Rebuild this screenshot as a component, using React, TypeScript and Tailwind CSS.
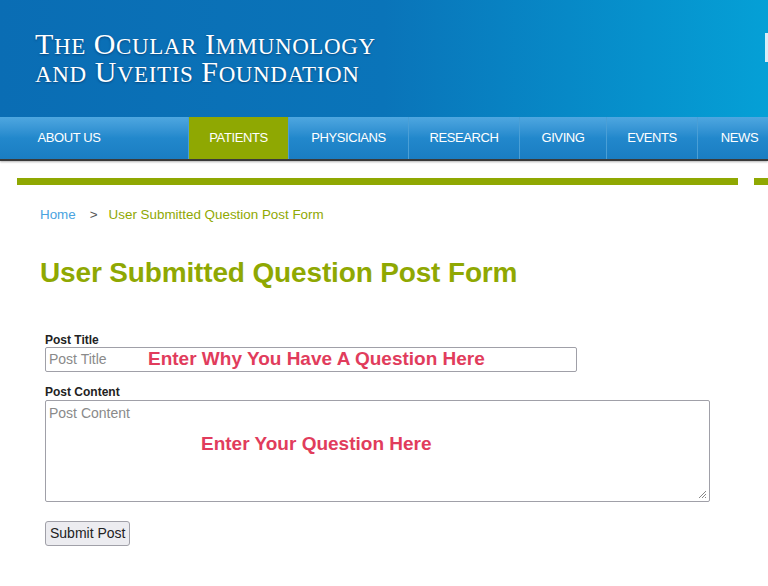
import React from 'react';

const navItems = [
  { label: 'ABOUT US', w: 'w-[189px]' },
  { label: 'PATIENTS', w: 'w-[100px]', active: true },
  { label: 'PHYSICIANS', w: 'w-[120px]' },
  { label: 'RESEARCH', w: 'w-[111px]' },
  { label: 'GIVING', w: 'w-[87px]' },
  { label: 'EVENTS', w: 'w-[91px]' },
  { label: 'NEWS', w: 'w-[84px]' },
];

// logo words: big initial + smaller caps
function LogoLine({ words }: { words: string[] }) {
  return (
    <div className="h-[28px] leading-[28px] whitespace-nowrap">
      {words.map((w, i) => (
        <span key={i} className={i > 0 ? 'ml-[8px]' : ''}>
          {w.startsWith('*') ? (
            <span className="text-[23px]">{w.slice(1)}</span>
          ) : (
            <>
              <span className="text-[30px]">{w[0]}</span>
              <span className="text-[23px]">{w.slice(1)}</span>
            </>
          )}
        </span>
      ))}
    </div>
  );
}

export default function App() {
  return (
    <div className="w-[768px] h-[586px] overflow-hidden bg-white font-['Liberation_Sans',Arial,sans-serif]">
      {/* header */}
      <div className="relative h-[117px] bg-gradient-to-r from-[#0a6db4] via-[#0a74b9] to-[#05a0d6]">
        <div className="pt-[30px] pl-[35px] text-white font-['Liberation_Serif','Times_New_Roman',serif] tracking-[0.6px] [text-shadow:0_1px_2px_rgba(0,30,70,0.5)]">
          <LogoLine words={['THE', 'OCULAR', 'IMMUNOLOGY']} />
          <LogoLine words={['*AND', 'UVEITIS', 'FOUNDATION']} />
        </div>
        <div className="absolute right-0 top-[33px] w-[3px] h-[29px] bg-[#d8eef8]" />
      </div>

      {/* nav */}
      <div className="flex h-[44px] border-b-[2px] border-[#3a3a3a] shadow-[0_1px_2px_rgba(0,0,0,0.3)]">
        {navItems.map((item) => (
          <div
            key={item.label}
            className={`${item.w} shrink-0 flex items-center justify-center text-white text-[13px] tracking-[-0.4px] border-r border-[#4a9fd6] ${
              item.active
                ? 'bg-[#8fa802]'
                : 'bg-gradient-to-b from-[#4ea7e0] via-[#2288cc] to-[#1a7dc2]'
            }`}
          >
            <span className={item.label === 'ABOUT US' ? 'mr-[50px]' : ''}>{item.label}</span>
          </div>
        ))}
      </div>

      {/* green rule */}
      <div className="flex mt-[17px] h-[7px]">
        <div className="ml-[17px] w-[721px] bg-[#8fa802]" />
        <div className="ml-[16px] flex-1 bg-[#8fa802]" />
      </div>

      <div className="pl-[40px]">
        {/* breadcrumb */}
        <div className="mt-[22px] flex items-center text-[13.4px] h-[16px]">
          <span className="text-[#4aa3df]">Home</span>
          <span className="ml-[14px] text-[#555]">&gt;</span>
          <span className="ml-[11px] text-[#8fa802]">User Submitted Question Post Form</span>
        </div>

        {/* heading */}
        <h1 className="mt-[33px] text-[28px] leading-[34px] font-bold text-[#8fa802] tracking-[-0.15px]">
          User Submitted Question Post Form
        </h1>

        {/* form */}
        <form className="mt-[43px] pl-[5px]">
          <label className="block text-[12px] font-bold text-[#222] leading-[14px]">Post Title</label>
          <div className="relative w-[532px] h-[25px] border border-[#a0a0a8] rounded-[2px] flex items-center">
            <span className="pl-[3px] text-[14px] text-[#8a8a8a]">Post Title</span>
            <span className="absolute left-[102px] top-[-3px] text-[19px] font-bold text-[#e13c5c]">
              Enter Why You Have A Question Here
            </span>
          </div>

          <label className="block mt-[13px] text-[12px] font-bold text-[#222] leading-[14px]">Post Content</label>
          <div className="relative mt-[1px] w-[665px] h-[102px] border border-[#a0a0a8] rounded-[2px]">
            <span className="absolute left-[3px] top-[2px] text-[14px] text-[#8a8a8a]">Post Content</span>
            <span className="absolute left-[155px] top-[29px] text-[19px] font-bold text-[#e13c5c]">
              Enter Your Question Here
            </span>
            <svg className="absolute right-[2px] bottom-[2px]" width="10" height="10" viewBox="0 0 10 10">
              <path d="M9 2 L2 9 M9 5 L5 9 M9 8 L8 9" stroke="#888" strokeWidth="1" />
            </svg>
          </div>

          <button
            type="button"
            className="block mt-[19px] h-[25px] px-[4px] text-[14px] text-[#222] bg-[#ececf0] border border-[#a0a0a8] rounded-[3px]"
          >
            Submit Post
          </button>
        </form>
      </div>
    </div>
  );
}
